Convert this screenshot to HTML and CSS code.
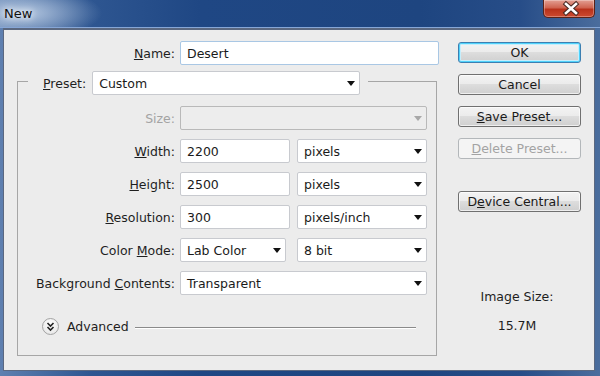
FILE: index.html
```html
<!DOCTYPE html>
<html lang="en">
<head>
    <meta charset="UTF-8">
    <meta name="viewport" content="width=device-width, initial-scale=1.0">
    <title>New</title>
    <link rel="stylesheet" href="styles.css">
</head>
<body>
    <div class="window">
        <div class="titlebar">
            <div class="title">New</div>
            <button class="close-btn" aria-label="Close">
                <svg width="52" height="17" viewBox="0 0 52 17">
                    <path d="M22 4 L32 13 M32 4 L22 13" stroke="#4a2a24" stroke-width="4.6" stroke-linecap="square" fill="none"/>
                    <path d="M22 4 L32 13 M32 4 L22 13" stroke="#fff" stroke-width="2.6" stroke-linecap="square" fill="none"/>
                </svg>
            </button>
        </div>

        <div class="client">
            <div class="main">
                <div class="row name-row">
                    <label class="label"><u>N</u>ame:</label>
                    <div class="field name-field">Desert</div>
                </div>

                <fieldset class="group">
                    <legend class="preset">
                        <label class="preset-label"><u>P</u>reset:</label>
                        <div class="field select preset-select"><span>Custom</span><i class="caret"></i></div>
                    </legend>

                    <div class="rows">
                        <div class="row">
                            <label class="label disabled">Size:</label>
                            <div class="field select disabled-field w-wide"><span></span><i class="caret"></i></div>
                        </div>
                        <div class="row">
                            <label class="label"><u>W</u>idth:</label>
                            <div class="field w-num">2200</div>
                            <div class="field select w-unit"><span>pixels</span><i class="caret"></i></div>
                        </div>
                        <div class="row">
                            <label class="label"><u>H</u>eight:</label>
                            <div class="field w-num">2500</div>
                            <div class="field select w-unit"><span>pixels</span><i class="caret"></i></div>
                        </div>
                        <div class="row">
                            <label class="label"><u>R</u>esolution:</label>
                            <div class="field w-num">300</div>
                            <div class="field select w-unit"><span>pixels/inch</span><i class="caret"></i></div>
                        </div>
                        <div class="row">
                            <label class="label">Color <u>M</u>ode:</label>
                            <div class="field select w-mode"><span>Lab Color</span><i class="caret"></i></div>
                            <div class="field select w-unit"><span>8 bit</span><i class="caret"></i></div>
                        </div>
                        <div class="row">
                            <label class="label">Background <u>C</u>ontents:</label>
                            <div class="field select w-wide"><span>Transparent</span><i class="caret"></i></div>
                        </div>
                    </div>

                    <div class="advanced">
                        <span class="adv-btn">
                            <svg width="17" height="17" viewBox="0 0 17 17">
                                <path d="M5.5 5 L8.5 8 L11.5 5 M5.5 9 L8.5 12 L11.5 9" stroke="#222" stroke-width="1.6" fill="none"/>
                            </svg>
                        </span>
                        <span class="adv-text">Advanced</span>
                        <span class="adv-line"></span>
                    </div>
                </fieldset>
            </div>

            <div class="side">
                <button class="btn btn-default">OK</button>
                <button class="btn">Cancel</button>
                <button class="btn"><u>S</u>ave Preset...</button>
                <button class="btn" disabled><u>D</u>elete Preset...</button>
                <button class="btn btn-device">D<u>e</u>vice Central...</button>

                <div class="image-size">
                    <div>Image Size:</div>
                    <div class="size-value">15.7M</div>
                </div>
            </div>
        </div>
    </div>
</body>
</html>
```

FILE: styles.css
```css
body {
    margin: 0;
    font-family: "DejaVu Sans", sans-serif;
    font-size: 12.5px;
    color: #1e1e1e;
}

.window {
    width: 600px;
    height: 376px;
    display: flex;
    flex-direction: column;
    background: linear-gradient(to right, #5f80b0 0, #2e5691 90px, #1f4784 200px, #1e4580 420px, #274d88 520px, #4b6d9d 600px);
}

.titlebar {
    height: 27px;
    display: flex;
    justify-content: space-between;
    align-items: flex-start;
    border-bottom: 1px solid #86a6d6;
    background: radial-gradient(ellipse 80px 26px at 22px 13px, rgba(200, 216, 236, 0.85), rgba(200, 216, 236, 0));
}

.title {
    padding-left: 4px;
    line-height: 27px;
    font-size: 13px;
    color: #111;
    text-shadow: 0 0 6px #fff, 0 0 10px rgba(255, 255, 255, 0.7);
}

.close-btn {
    width: 52px;
    height: 18px;
    margin-right: 5px;
    padding: 0;
    border: 1px solid #5a2218;
    border-top: none;
    border-radius: 0 0 5px 5px;
    background: linear-gradient(#e3a093, #cf6450 45%, #b8321b 55%, #cc4a30);
    box-shadow: inset 0 0 0 1px rgba(255, 255, 255, 0.3);
}

.close-btn svg {
    display: block;
}

.client {
    flex: 1;
    margin: 0 5px 5px 3px;
    border: 1px solid #5b6880;
    border-top-width: 2px;
    background-color: #ececec;
    display: flex;
}

.main {
    width: 454px;
}

.row {
    display: flex;
    align-items: center;
    height: 24px;
}

.label {
    width: 157px;
    margin-right: 5px;
    text-align: right;
    white-space: nowrap;
}

u {
    text-underline-offset: 1px;
}

.name-row {
    margin-top: 11px;
}

.name-row .label {
    width: 171px;
}

.field {
    box-sizing: border-box;
    height: 24px;
    padding: 0 6px;
    border: 1px solid #c8cacf;
    border-radius: 2px;
    background-color: #fff;
    display: flex;
    align-items: center;
    color: #1a1a1a;
}

.name-field {
    width: 259px;
    border-color: #a9c7e4;
}

.caret {
    margin-left: auto;
    margin-right: -2px;
    width: 0;
    height: 0;
    border-left: 4px solid transparent;
    border-right: 4px solid transparent;
    border-top: 5px solid #111;
}

.group {
    box-sizing: border-box;
    width: 420px;
    margin: 2px 0 0 13px;
    padding: 11px 0 20px 0;
    border: 1px solid #a6a6a6;
    min-inline-size: 0;
}

.preset {
    margin-left: 10px;
    padding: 4px 8px 0 15px;
    display: flex;
    align-items: center;
}

.preset-label {
    margin-right: 6px;
}

.preset-select {
    width: 268px;
}

.rows {
    display: flex;
    flex-direction: column;
    gap: 9px;
}

.w-wide {
    width: 247px;
}

.w-num {
    width: 110px;
}

.w-unit {
    width: 130px;
    margin-left: 7px;
}

.w-mode {
    width: 106px;
}

.w-mode + .w-unit {
    margin-left: 11px;
}

.disabled {
    color: #a3a3a3;
}

.disabled-field {
    background-color: #ededed;
    border-color: #b9b9b9;
}

.disabled-field .caret {
    border-top-color: #a8a8a8;
}

.advanced {
    margin-top: 23px;
    padding-left: 24px;
    height: 17px;
    display: flex;
    align-items: center;
}

.adv-btn {
    box-sizing: border-box;
    width: 17px;
    height: 17px;
    border: 1px solid #a3a3a3;
    border-radius: 50%;
    background: radial-gradient(circle at 50% 35%, #fff, #e2e2e2);
}

.adv-btn svg {
    display: block;
    margin: -1px;
}

.adv-text {
    margin-left: 8px;
}

.adv-line {
    flex: 1;
    height: 1px;
    margin: 1px 20px 0 6px;
    background-color: #8a8a8a;
    box-shadow: 0 1px 0 #fff;
}

.side {
    width: 123px;
    padding-top: 12px;
    display: flex;
    flex-direction: column;
    gap: 11px;
}

.btn {
    box-sizing: border-box;
    height: 21px;
    padding: 0;
    border: 1px solid #707070;
    border-radius: 3px;
    background: linear-gradient(#f3f3f3, #ebebeb 50%, #dddddd 50%, #cfcfcf);
    box-shadow: inset 0 0 0 1px rgba(255, 255, 255, 0.65);
    font-family: inherit;
    font-size: 12.5px;
    color: #1a1a1a;
}

.btn-default {
    border-color: #3c7fb1;
    box-shadow: inset 0 0 0 1px #4fd2fb, inset 0 0 0 2px #c5eefc;
}

.btn:disabled {
    border-color: #b3b7ba;
    background: #f4f4f4;
    box-shadow: none;
    color: #a3a3a3;
}

.btn-device {
    margin-top: 21px;
}

.image-size {
    margin-top: 66px;
    padding-right: 5px;
    text-align: center;
    line-height: 15px;
}

.size-value {
    margin-top: 14px;
}
```
